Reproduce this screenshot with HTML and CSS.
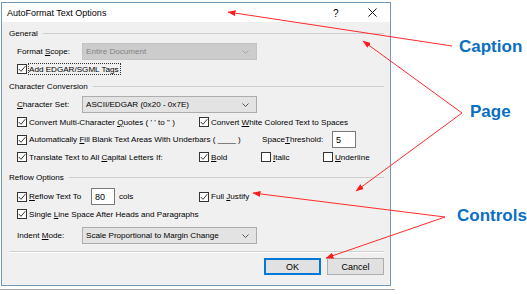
FILE: index.html
```html
<!DOCTYPE html>
<html>
<head>
<meta charset="utf-8">
<link rel="stylesheet" href="styles.css">
</head>
<body>
<div class="stage">
  <div class="window">
    <div class="titlebar">
      <span class="title">AutoFormat Text Options</span>
      <span class="help">?</span>
      <span class="close"><svg width="9" height="9" viewBox="0 0 9 9"><path d="M0.5 0.5 L8.5 8.5 M8.5 0.5 L0.5 8.5" stroke="#111" stroke-width="1" fill="none"/></svg></span>
    </div>
    <div class="body">
      <div class="ghead g1"><span>General</span><i class="gline"></i></div>
      <div class="row r-combo mt3">
        <span class="lbl">Format <u>S</u>cope:</span>
        <span class="combo disabled"><span class="ctext">Entire Document</span><svg class="chev" width="7" height="4" viewBox="0 0 7 4"><path d="M0.5 0.5 L3.5 3.5 L6.5 0.5" stroke="#a6a6a6" fill="none"/></svg></span>
      </div>
      <div class="row r-cb mt2">
        <span class="cb on"><svg width="8" height="8" viewBox="0 0 8 8"><path d="M0.8 4 L3 6.3 L7.3 1.2" stroke="#222" stroke-width="0.9" fill="none"/></svg></span>
        <span class="focus">Add EDGAR/SGML Tags</span>
      </div>
      <div class="ghead mt3"><span>Character Conversion</span><i class="gline"></i></div>
      <div class="row r-combo mt3">
        <span class="lbl"><u>C</u>haracter Set:</span>
        <span class="combo"><span class="ctext">ASCII/EDGAR (0x20 - 0x7E)</span><svg class="chev" width="7" height="4" viewBox="0 0 7 4"><path d="M0.5 0.5 L3.5 3.5 L6.5 0.5" stroke="#555" fill="none"/></svg></span>
      </div>
      <div class="row r-cb mt2">
        <span class="cell c182"><span class="cb on"><svg width="8" height="8" viewBox="0 0 8 8"><path d="M0.8 4 L3 6.3 L7.3 1.2" stroke="#222" stroke-width="0.9" fill="none"/></svg></span><span class="txt">Convert Multi-Character <u>Q</u>uotes ( ' ' to " )</span></span>
        <span class="cell"><span class="cb on"><svg width="8" height="8" viewBox="0 0 8 8"><path d="M0.8 4 L3 6.3 L7.3 1.2" stroke="#222" stroke-width="0.9" fill="none"/></svg></span><span class="txt">Convert <u>W</u>hite Colored Text to Spaces</span></span>
      </div>
      <div class="row r-input mt2">
        <span class="cell c245"><span class="cb on"><svg width="8" height="8" viewBox="0 0 8 8"><path d="M0.8 4 L3 6.3 L7.3 1.2" stroke="#222" stroke-width="0.9" fill="none"/></svg></span><span class="txt">Automatically <u>F</u>ill Blank Text Areas With Underbars ( ____ )</span></span>
        <span class="cell c70">Space <u>T</u>hreshold:</span>
        <span class="input">5</span>
      </div>
      <div class="row r-cb mt2">
        <span class="cell c182"><span class="cb on"><svg width="8" height="8" viewBox="0 0 8 8"><path d="M0.8 4 L3 6.3 L7.3 1.2" stroke="#222" stroke-width="0.9" fill="none"/></svg></span><span class="txt">Translate Text to All <u>C</u>apital Letters If:</span></span>
        <span class="cell c62"><span class="cb on"><svg width="8" height="8" viewBox="0 0 8 8"><path d="M0.8 4 L3 6.3 L7.3 1.2" stroke="#222" stroke-width="0.9" fill="none"/></svg></span><span class="txt"><u>B</u>old</span></span>
        <span class="cell c62"><span class="cb"></span><span class="txt"><u>I</u>talic</span></span>
        <span class="cell"><span class="cb"></span><span class="txt"><u>U</u>nderline</span></span>
      </div>
      <div class="ghead mt6"><span>Reflow Options</span><i class="gline"></i></div>
      <div class="row r-input mt4">
        <span class="cell c182">
          <span class="cell c74"><span class="cb on"><svg width="8" height="8" viewBox="0 0 8 8"><path d="M0.8 4 L3 6.3 L7.3 1.2" stroke="#222" stroke-width="0.9" fill="none"/></svg></span><span class="txt"><u>R</u>eflow Text To</span></span>
          <span class="input">80</span>
          <span class="cols">cols</span>
        </span>
        <span class="cell"><span class="cb on"><svg width="8" height="8" viewBox="0 0 8 8"><path d="M0.8 4 L3 6.3 L7.3 1.2" stroke="#222" stroke-width="0.9" fill="none"/></svg></span><span class="txt">Full <u>J</u>ustify</span></span>
      </div>
      <div class="row r-cb mt2">
        <span class="cb on"><svg width="8" height="8" viewBox="0 0 8 8"><path d="M0.8 4 L3 6.3 L7.3 1.2" stroke="#222" stroke-width="0.9" fill="none"/></svg></span><span class="txt">Single <u>L</u>ine Space After Heads and Paragraphs</span>
      </div>
      <div class="row r-combo mt6">
        <span class="lbl">Indent <u>M</u>ode:</span>
        <span class="combo"><span class="ctext">Scale Proportional to Margin Change</span><svg class="chev" width="7" height="4" viewBox="0 0 7 4"><path d="M0.5 0.5 L3.5 3.5 L6.5 0.5" stroke="#555" fill="none"/></svg></span>
      </div>
      <div class="sep"></div>
      <div class="buttons">
        <span class="btn default">OK</span>
        <span class="btn">Cancel</span>
      </div>
    </div>
  </div>
  <div class="shadow"></div>

  <svg class="annot" width="527" height="294" viewBox="0 0 527 294">
    <defs>
      <marker id="ah" markerWidth="8" markerHeight="6" refX="7.5" refY="3" orient="auto" markerUnits="userSpaceOnUse">
        <path d="M0 0 L8 3 L0 6 Z" fill="#ff1a1a"/>
      </marker>
    </defs>
    <g stroke="#ff2a2a" stroke-width="1" fill="none" marker-end="url(#ah)">
      <line x1="452" y1="46" x2="228" y2="12"/>
      <line x1="462" y1="113" x2="363" y2="41"/>
      <line x1="462" y1="113" x2="356" y2="191"/>
      <line x1="445" y1="217" x2="253" y2="193"/>
      <line x1="445" y1="217" x2="326" y2="258"/>
    </g>
  </svg>
  <div class="label l-caption">Caption</div>
  <div class="label l-page">Page</div>
  <div class="label l-controls">Controls</div>
</div>
</body>
</html>
```

FILE: styles.css
```css
html, body {
  margin: 0;
  padding: 0;
  background: #ffffff;
}
.stage {
  position: relative;
  width: 527px;
  height: 294px;
  overflow: hidden;
  font-family: "Liberation Sans", Arial, sans-serif;
  font-size: 8.1px;
  color: #000;
}
.window {
  margin: 2px 0 0 1px;
  width: 390px;
  height: 284px;
  box-sizing: border-box;
  border: 1px solid #7497b6;
  background: #f0f0f0;
  display: flex;
  flex-direction: column;
}
.titlebar {
  height: 19px;
  flex: none;
  background: #ffffff;
  display: flex;
  align-items: center;
  padding-left: 5px;
}
.title {
  font-size: 9px;
  flex: 1;
  padding-top: 1px;
}
.help {
  font-size: 10px;
  width: 8px;
  margin-right: 27px;
  padding-top: 1px;
}
.close {
  display: flex;
  margin-right: 13px;
}
.body {
  flex: 1;
  padding: 0 6px 0 7px;
  display: flex;
  flex-direction: column;
}
.ghead {
  height: 14px;
  display: flex;
  align-items: center;
  flex: none;
}
.g1 { margin-top: 4px; }
.gline {
  flex: 1;
  height: 1px;
  background: #cfcfcf;
  margin-left: 5px;
  margin-top: 1px;
}
.mt2 { margin-top: 2px; }
.mt3 { margin-top: 3px; }
.mt4 { margin-top: 4px; }
.mt6 { margin-top: 6px; }
.row {
  display: flex;
  align-items: center;
  padding-left: 8px;
  flex: none;
  white-space: nowrap;
}
.r-cb { height: 14px; }
.r-combo, .r-input { height: 17px; }
.lbl { width: 65px; flex: none; }
.combo {
  width: 175px;
  height: 17px;
  box-sizing: border-box;
  border: 1px solid #adadad;
  background: #e3e3e3;
  display: flex;
  align-items: center;
  padding: 0 7px 0 3px;
}
.combo.disabled {
  background: #cccccc;
  border-color: #c4c4c4;
  color: #838383;
}
.ctext { flex: 1; }
.chev { display: block; }
.cell {
  display: flex;
  align-items: center;
  flex: none;
}
.c182 { width: 182px; }
.c245 { width: 245px; }
.c70 { width: 70px; }
.c62 { width: 62px; }
.c74 { width: 74px; }
.cb {
  width: 10px;
  height: 10px;
  box-sizing: border-box;
  border: 1px solid #333333;
  background: #ffffff;
  display: flex;
  align-items: center;
  justify-content: center;
  flex: none;
  margin-right: 2px;
}
.txt { padding-left: 0; }
.focus {
  border: 1px dotted #333;
  padding: 1px 1px 0 0;
  margin-left: -1px;
}
.input {
  width: 24px;
  height: 17px;
  box-sizing: border-box;
  border: 1px solid #7a7a7a;
  background: #ffffff;
  display: flex;
  align-items: center;
  padding-left: 3px;
  font-size: 9px;
  flex: none;
}
.cols { margin-left: 4px; }
.sep {
  margin-top: 7px;
  height: 0;
  border-top: 1px solid #d2d2d2;
  border-bottom: 1px solid #ffffff;
  flex: none;
}
.buttons {
  margin-top: 5px;
  display: flex;
  justify-content: flex-end;
  gap: 6px;
  flex: none;
}
.btn {
  width: 57px;
  height: 17px;
  box-sizing: border-box;
  border: 1px solid #adadad;
  background: #e1e1e1;
  display: flex;
  align-items: center;
  justify-content: center;
  font-size: 9px;
}
.btn.default {
  border-color: #0078d7;
  box-shadow: inset 0 0 0 1px #0078d7;
}
.shadow {
  margin-top: 3px;
  width: 395px;
  height: 1px;
  background: #a9a9a9;
}
.annot {
  position: absolute;
  left: 0;
  top: 0;
  pointer-events: none;
}
.label {
  position: absolute;
  font-family: "Liberation Sans", Arial, sans-serif;
  font-weight: bold;
  font-size: 17px;
  line-height: 17px;
  color: #0b6fc1;
}
.l-caption { left: 459px; top: 38px; }
.l-page { left: 470px; top: 103px; }
.l-controls { left: 457px; top: 207px; }
```
